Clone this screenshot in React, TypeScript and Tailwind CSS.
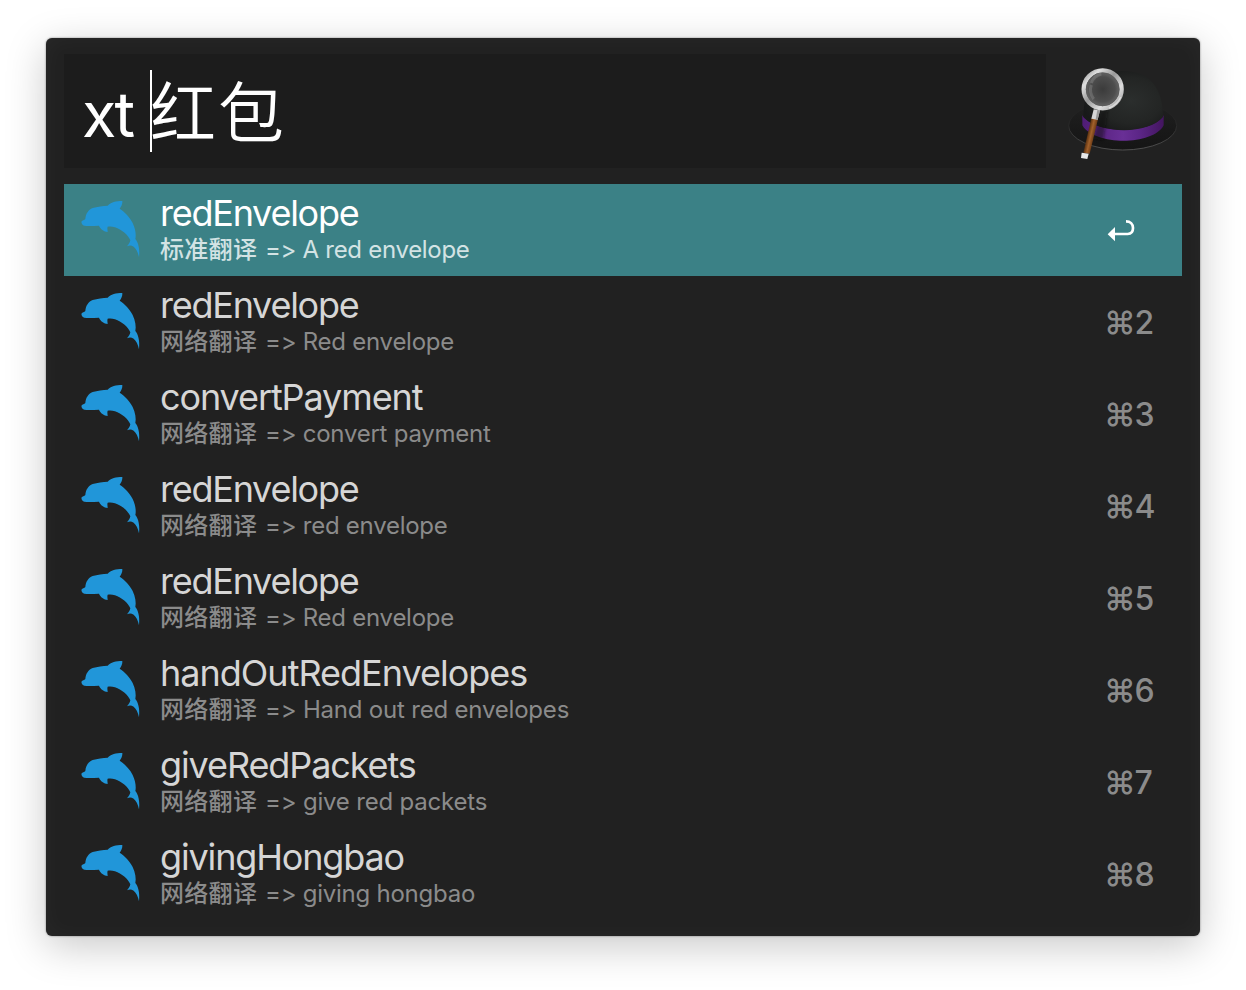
import React from "react";

type Result = { title: string; kind: string; text: string; titleTracking: string; textTracking: string };

const results: Result[] = [
  { title: "redEnvelope", kind: "标准翻译", text: "=> A red envelope", titleTracking: "tracking-[-1.25px]", textTracking: "tracking-[-0.3px]" },
  { title: "redEnvelope", kind: "网络翻译", text: "=> Red envelope", titleTracking: "tracking-[-1.25px]", textTracking: "tracking-[-0.25px]" },
  { title: "convertPayment", kind: "网络翻译", text: "=> convert payment", titleTracking: "tracking-[-1.1px]", textTracking: "tracking-[-0.25px]" },
  { title: "redEnvelope", kind: "网络翻译", text: "=> red envelope", titleTracking: "tracking-[-1.25px]", textTracking: "tracking-[-0.25px]" },
  { title: "redEnvelope", kind: "网络翻译", text: "=> Red envelope", titleTracking: "tracking-[-1.25px]", textTracking: "tracking-[-0.25px]" },
  { title: "handOutRedEnvelopes", kind: "网络翻译", text: "=> Hand out red envelopes", titleTracking: "tracking-[-1px]", textTracking: "tracking-[-0.2px]" },
  { title: "giveRedPackets", kind: "网络翻译", text: "=> give red packets", titleTracking: "tracking-[-1.1px]", textTracking: "tracking-[-0.2px]" },
  { title: "givingHongbao", kind: "网络翻译", text: "=> giving hongbao", titleTracking: "tracking-[-1.15px]", textTracking: "tracking-[-0.25px]" },
];

function Dolphin() {
  return (
    <svg className="h-[60px] w-[60px] shrink-0" viewBox="30 30 180 180" fill="#2196d9">
      <path d="M35 94C37 91 43 91 46 87C47 72 54 60 68 54C82 50 99 48 113 47C122 37 138 33 157 33C158 42 153 51 149 56C164 66 180 82 188 99C196 116 199 134 196 147C204 156 210 175 207 202C204 187 199 177 191 170C184 166 178 166 171 169C175 164 180 158 181 151C174 134 155 119 135 112C127 109 119 109 113 110C111 115 113 120 113 126C102 125 91 117 87 107C71 107 57 109 43 107C36 106 33 98 35 94Z" />
    </svg>
  );
}

function BowlerHat() {
  return (
    <svg className="h-[114px] w-[136px] shrink-0" viewBox="18 42 408 342">
      <defs>
        <radialGradient id="dome" cx="0.6" cy="0.5" r="0.6">
          <stop offset="0" stopColor="#2b2e2d" />
          <stop offset="0.65" stopColor="#232524" />
          <stop offset="1" stopColor="#181919" />
        </radialGradient>
        <linearGradient id="brim" x1="0" y1="0" x2="0" y2="1">
          <stop offset="0" stopColor="#212121" />
          <stop offset="0.6" stopColor="#191919" />
          <stop offset="1" stopColor="#151515" />
        </linearGradient>
        <linearGradient id="brimEdge" x1="0" y1="0" x2="0" y2="1">
          <stop offset="0" stopColor="#222" stopOpacity="0" />
          <stop offset="0.5" stopColor="#292929" />
          <stop offset="1" stopColor="#505050" />
        </linearGradient>
        <linearGradient id="band">
          <stop offset="0" stopColor="#4f1c75" />
          <stop offset="0.5" stopColor="#692f96" />
          <stop offset="0.7" stopColor="#5c2687" />
          <stop offset="1" stopColor="#43155f" />
        </linearGradient>
        <linearGradient id="rim" x1="0" y1="0" x2="1" y2="1">
          <stop offset="0" stopColor="#888" />
          <stop offset="0.2" stopColor="#e0e0e0" />
          <stop offset="0.45" stopColor="#999" />
          <stop offset="0.7" stopColor="#ddd" />
          <stop offset="1" stopColor="#999" />
        </linearGradient>
        <radialGradient id="lens">
          <stop offset="0" stopColor="#3b3b3b" />
          <stop offset="0.65" stopColor="#4d4d4d" />
          <stop offset="1" stopColor="#707070" />
        </radialGradient>
        <linearGradient id="wood" gradientUnits="userSpaceOnUse" x1="142" y1="285" x2="164" y2="290">
          <stop offset="0" stopColor="#59300f" />
          <stop offset="0.45" stopColor="#a2612b" />
          <stop offset="1" stopColor="#603311" />
        </linearGradient>
        <filter id="soft"><feGaussianBlur stdDeviation="5" /></filter>
      </defs>
      <ellipse cx="248" cy="257" rx="162" ry="73" fill="url(#brim)" stroke="url(#brimEdge)" strokeWidth="3" />
      <path d="M127 226C160 282 332 286 371 226V256C339 318 163 318 127 256Z" fill="url(#band)" />
      <path d="M130 231C130 150 165 93 250 93C335 93 368 151 369 231C326 284 178 283 130 231Z" fill="url(#dome)" />
      <path d="M182 214L205 205L190 302L160 296Z" fill="#090909" opacity="0.45" filter="url(#soft)" />
      <path d="M154 235L174 238L149 341L130 338Z" fill="url(#wood)" />
      <path d="M161 208L180 211L173 239L154 236Z" fill="#d6d6d6" />
      <path d="M172 210L180 211L173 239L167 238Z" fill="#999" />
      <path d="M125 338L146 341L142 357L123 354Z" fill="#e8e8e8" />
      <circle cx="188" cy="148" r="57" fill="url(#lens)" />
      <circle cx="188" cy="148" r="57" fill="none" stroke="url(#rim)" strokeWidth="13" />
      <circle cx="188" cy="148" r="49" fill="none" stroke="#5d5d5d" strokeWidth="3" />
      <path d="M154 129C160 114 170 105 184 102M154 135C150 147 150 162 161 177" fill="none" stroke="#999" strokeOpacity="0.35" strokeWidth="9" />
      <path d="M242 172A59 59 0 0 1 207 204" fill="none" stroke="#fff" strokeOpacity="0.5" strokeWidth="4" />
    </svg>
  );
}

function ReturnArrow() {
  return (
    <svg className="ml-[3px] h-[24px] w-[30px]" viewBox="84 87 90 72">
      <path d="M86 133L108 111V154Z" fill="white" />
      <path d="M104 132H146C157 132 162 124 162 114C162 102 154 94 141 94" fill="none" stroke="white" strokeWidth="8" />
    </svg>
  );
}

export default function App() {
  return (
    <div className="h-[990px] overflow-hidden bg-white pl-[46px] pt-[38px] font-['Inter','Noto_Sans_CJK_SC',sans-serif]">
      <main className="h-[898px] w-[1154px] rounded-[6px] bg-[#212121] px-[18px] pt-4 shadow-[0_0_2px_rgba(0,0,0,0.5),0_10px_40px_rgba(0,0,0,0.22),inset_0_0_24px_rgba(255,255,255,0.035)]">
        <header className="flex h-[114px]">
          <div className="flex h-full w-[982px] bg-[#1c1c1c] pl-[18px] text-white">
            <span className="mt-[18px] w-[68px] whitespace-pre text-[63px] leading-[84px] font-normal tracking-[-3px]">xt </span>
            <span className="mt-4 h-[82px] w-[2px] shrink-0 bg-white" />
            <span className="mt-[6px] ml-[-2px] font-['Noto_Sans_CJK_SC',sans-serif] text-[66px] leading-[96px] font-[350] tracking-[2px]">红包</span>
          </div>
          <BowlerHat />
        </header>
        <ul className="mt-4">
          {results.map((r, i) => (
            <li key={i} className={i === 0 ? "flex h-[92px] bg-[#3b8186] pl-4 pt-4" : "flex h-[92px] pl-4 pt-4"}>
              <Dolphin />
              <div className="-mt-[11px] ml-5 flex-1 whitespace-nowrap">
                <div className={`${r.titleTracking} ${i === 0 ? "text-white" : "text-[#d6d6d6]"} text-[36px] leading-[48px] font-[420]`}>{r.title}</div>
                <div className={`${i === 0 ? "text-[#d3e3e4]" : "text-[#8b8b8b]"} -mt-[1px] flex h-7 text-[24px] leading-7`}>
                  <span className="mr-[8px] w-[97px] font-medium tracking-[0.3px]">{r.kind}</span>
                  <span className={`${r.textTracking} font-[440]`}>{r.text}</span>
                </div>
              </div>
              <div className="mr-[28px] flex h-[60px] w-[50px] items-center pt-[2px] text-[32px] font-[450] tracking-[-1.2px] text-[#8b8b8b]">
                {i === 0 ? <ReturnArrow /> : <span>⌘{i + 1}</span>}
              </div>
            </li>
          ))}
        </ul>
      </main>
    </div>
  );
}
